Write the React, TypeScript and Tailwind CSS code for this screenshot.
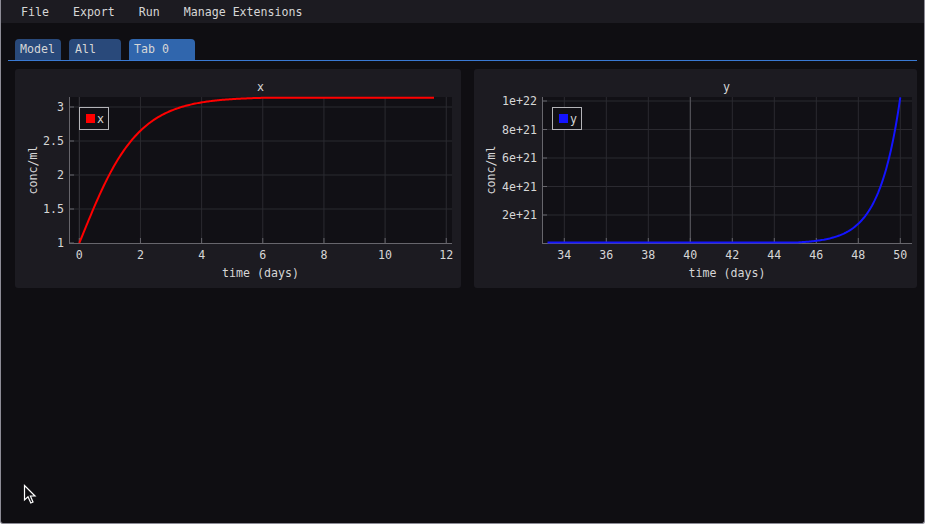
import React from "react";

const FONT = '"DejaVu Sans Mono", "Liberation Mono", monospace';
const TXT = "#d6d6d6";
const GRID = "#2b2a30";
const AXIS = "#67666c";

const K = 3.147;
const xCurve = (t: number) => K * Math.exp(Math.log(1 / K) * Math.exp(-0.95 * t));

function LeftPlot() {
  const W = 446;
  const H = 191;
  const x0 = 54, x1 = 437, yb = 146;
  const px = (t: number) => 64.3 + t * 30.58;
  const py = (v: number) => 146 - (v - 1) * 68;
  const pts: string[] = [];
  for (let i = 0; i <= 300; i++) {
    const t = (11.6 * i) / 300;
    const v = xCurve(t);
    pts.push(`${px(t).toFixed(2)},${Math.max(0.8, py(v)).toFixed(2)}`);
  }
  const xt = [0, 2, 4, 6, 8, 10, 12];
  const yt = [1, 1.5, 2, 2.5, 3];
  return (
    <svg width={W} height={H} style={{ fontFamily: FONT, overflow: "visible" }} className="block">
      <rect x={x0} y={0} width={x1 - x0} height={yb} fill="#111015" />
      {xt.map((t) => (
        <line key={t} x1={px(t)} x2={px(t)} y1={0} y2={yb} stroke={t === 0 ? "#3a393f" : GRID} strokeWidth={1} />
      ))}
      {yt.slice(1).map((v) => (
        <line key={v} x1={x0} x2={x1} y1={py(v)} y2={py(v)} stroke={GRID} strokeWidth={1} />
      ))}
      <line x1={x0 + 0.5} x2={x0 + 0.5} y1={0} y2={yb} stroke={AXIS} />
      <line x1={x0} x2={x1} y1={yb + 0.5} y2={yb + 0.5} stroke={AXIS} />
      {xt.map((t) => (
        <line key={"tk" + t} x1={px(t)} x2={px(t)} y1={yb - 5} y2={yb} stroke={AXIS} />
      ))}
      {yt.map((v) => (
        <line key={"ty" + v} x1={x0} x2={x0 + 5} y1={py(v)} y2={py(v)} stroke={AXIS} />
      ))}
      <polyline points={pts.join(" ")} fill="none" stroke="#ff0000" strokeWidth={2} strokeLinejoin="round" />
      {xt.map((t) => (
        <text key={"lx" + t} x={px(t)} y={162} fontSize={11.6} fill={TXT} textAnchor="middle">
          {t}
        </text>
      ))}
      {yt.map((v) => (
        <text key={"ly" + v} x={49} y={py(v) + 4} fontSize={11.6} fill={TXT} textAnchor="end">
          {v}
        </text>
      ))}
      <text x={245.5} y={180} fontSize={11.6} fill={TXT} textAnchor="middle">
        time (days)
      </text>
      <text x={22} y={73} fontSize={11.6} fill={TXT} textAnchor="middle" transform="rotate(-90 22 73)">
        conc/ml
      </text>
      <rect x={64.5} y={10.5} width={29} height={22} fill="#111015" stroke="#b4b4b8" strokeWidth={1} />
      <rect x={71} y={17} width={9} height={9} fill="#ff0000" />
      <text x={82} y={26} fontSize={11.6} fill={TXT}>
        x
      </text>
    </svg>
  );
}

function RightPlot() {
  const W = 443;
  const H = 191;
  const x0 = 68, x1 = 438, yb = 146;
  const px = (t: number) => 90.3 + (t - 34) * 21;
  const py = (u: number) => 146.5 - u * 14.25;
  const pts: string[] = [];
  for (let i = 0; i <= 300; i++) {
    const t = 33.2 + ((50 - 33.2) * i) / 300;
    const u = 10.25 * Math.exp(t - 50);
    pts.push(`${px(t).toFixed(2)},${Math.max(0, Math.min(145.5, py(u))).toFixed(2)}`);
  }
  const xt = [34, 36, 38, 40, 42, 44, 46, 48, 50];
  const yt = [2, 4, 6, 8, 10];
  const lab = (u: number) => (u === 10 ? "1e+22" : `${u}e+21`);
  return (
    <svg width={W} height={H} style={{ fontFamily: FONT, overflow: "visible" }} className="block">
      <rect x={x0} y={0} width={x1 - x0} height={yb} fill="#111015" />
      {xt.map((t) => (
        <line key={t} x1={px(t)} x2={px(t)} y1={0} y2={yb} stroke={GRID} strokeWidth={1} />
      ))}
      {yt.map((u) => (
        <line key={u} x1={x0} x2={x1} y1={py(u)} y2={py(u)} stroke={GRID} strokeWidth={1} />
      ))}
      <line x1={px(40)} x2={px(40)} y1={0} y2={yb} stroke="#5a595f" strokeWidth={1} />
      <line x1={x0 + 0.5} x2={x0 + 0.5} y1={0} y2={yb} stroke={AXIS} />
      <line x1={x0} x2={x1} y1={yb + 0.5} y2={yb + 0.5} stroke={AXIS} />
      {xt.map((t) => (
        <line key={"tk" + t} x1={px(t)} x2={px(t)} y1={yb - 5} y2={yb} stroke={AXIS} />
      ))}
      {yt.map((u) => (
        <line key={"ty" + u} x1={x0} x2={x0 + 5} y1={py(u)} y2={py(u)} stroke={AXIS} />
      ))}
      <polyline points={pts.join(" ")} fill="none" stroke="#1414ff" strokeWidth={2} strokeLinejoin="round" />
      {xt.map((t) => (
        <text key={"lx" + t} x={px(t)} y={162} fontSize={11.6} fill={TXT} textAnchor="middle">
          {t}
        </text>
      ))}
      {yt.map((u) => (
        <text key={"ly" + u} x={63} y={py(u) + 4} fontSize={11.6} fill={TXT} textAnchor="end">
          {lab(u)}
        </text>
      ))}
      <text x={253} y={180} fontSize={11.6} fill={TXT} textAnchor="middle">
        time (days)
      </text>
      <text x={21} y={73} fontSize={11.6} fill={TXT} textAnchor="middle" transform="rotate(-90 21 73)">
        conc/ml
      </text>
      <rect x={78.5} y={10.5} width={29} height={22} fill="#111015" stroke="#b4b4b8" strokeWidth={1} />
      <rect x={85} y={17} width={9} height={9} fill="#1414ff" />
      <text x={96} y={26} fontSize={11.6} fill={TXT}>
        y
      </text>
    </svg>
  );
}

export default function App() {
  return (
    <div
      className="relative w-[925px] h-[524px] bg-[#0f0e12] border-x border-b border-[#8d8c96] rounded-b-[3px] overflow-hidden flex flex-col text-[#d6d6d6] text-[11.6px] leading-none"
      style={{ fontFamily: FONT }}
    >
      <div className="h-[23px] shrink-0 bg-[#1c1b21] flex items-center pt-[2px] pl-[20px] gap-[24px]">
        <span>File</span>
        <span>Export</span>
        <span>Run</span>
        <span>Manage Extensions</span>
      </div>
      <div className="px-[7px] pt-[16px]">
        <div className="flex items-end gap-[8px] pl-[7px] h-[21px]">
          <div className="w-[46px] h-[21px] bg-[#29497a] rounded-t-[4px] pl-[5px] flex items-center">Model</div>
          <div className="w-[52px] h-[21px] bg-[#29497a] rounded-t-[4px] pl-[6px] flex items-center">All</div>
          <div className="w-[66px] h-[21px] bg-[#3066ad] rounded-t-[4px] pl-[5px] flex items-center">Tab 0</div>
        </div>
        <div className="h-px w-[909px] bg-[#3a7ad4]" />
      </div>
      <div className="flex gap-[13px] pl-[14px] pt-[8px]">
        <div className="w-[446px] h-[219px] bg-[#1c1b21] rounded-[3px] flex flex-col">
          <div className="h-[28px] flex items-start pt-[13px] pl-[242px]">x</div>
          <LeftPlot />
        </div>
        <div className="w-[443px] h-[219px] bg-[#1c1b21] rounded-[3px] flex flex-col">
          <div className="h-[28px] flex items-start pt-[13px] pl-[249px]">y</div>
          <RightPlot />
        </div>
      </div>
      <svg
        className="absolute left-[22px] top-[484px]"
        width="14"
        height="21"
        viewBox="0 0 14 21"
      >
        <path d="M1.5 1.5 L1.5 16 L5 12.8 L7.8 19 L10 18 L7.4 12 L12 12 Z" fill="#0f0e12" stroke="#ffffff" strokeWidth="1.2" strokeLinejoin="miter" />
      </svg>
    </div>
  );
}
